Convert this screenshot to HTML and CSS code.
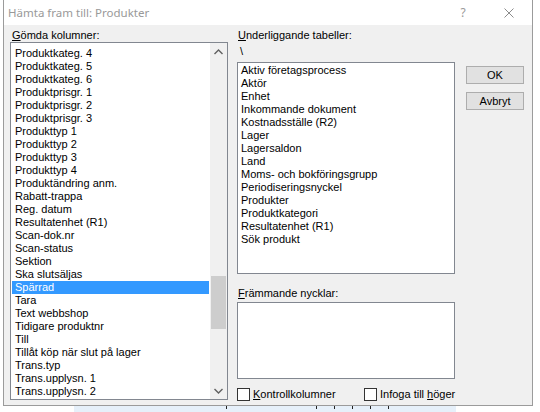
FILE: index.html
```html
<!DOCTYPE html>
<html lang="sv">
<head>
  <meta charset="UTF-8">
  <title>Hämta fram till: Produkter</title>
  <link rel="stylesheet" href="styles.css">
</head>
<body>

  <div class="window">
    <div class="titlebar">
      <span class="title">Hämta fram till: Produkter</span>
      <span class="caption-btn help">?</span>
      <span class="caption-btn close">
        <svg width="10" height="10" viewBox="0 0 10 10">
          <path d="M0.5 0.5 L9.5 9.5 M9.5 0.5 L0.5 9.5" stroke="#8c8c8c" stroke-width="1" fill="none"/>
        </svg>
      </span>
    </div>

    <div class="dialog">
      <!-- dolda kolumner -->
      <div class="col col-left">
        <div class="label"><u>G</u>ömda kolumner:</div>
        <div class="listbox listbox-hidden">
          <ul class="items">
            <li>Produktkateg. 4</li>
            <li>Produktkateg. 5</li>
            <li>Produktkateg. 6</li>
            <li>Produktprisgr. 1</li>
            <li>Produktprisgr. 2</li>
            <li>Produktprisgr. 3</li>
            <li>Produkttyp 1</li>
            <li>Produkttyp 2</li>
            <li>Produkttyp 3</li>
            <li>Produkttyp 4</li>
            <li>Produktändring anm.</li>
            <li>Rabatt-trappa</li>
            <li>Reg. datum</li>
            <li>Resultatenhet (R1)</li>
            <li>Scan-dok.nr</li>
            <li>Scan-status</li>
            <li>Sektion</li>
            <li>Ska slutsäljas</li>
            <li class="selected">Spärrad</li>
            <li>Tara</li>
            <li>Text webbshop</li>
            <li>Tidigare produktnr</li>
            <li>Till</li>
            <li>Tillåt köp när slut på lager</li>
            <li>Trans.typ</li>
            <li>Trans.upplysn. 1</li>
            <li>Trans.upplysn. 2</li>
          </ul>
          <div class="scrollbar">
            <div class="arrow">
              <svg width="9" height="6" viewBox="0 0 9 6">
                <path d="M0.5 5 L4.5 1 L8.5 5" stroke="#606060" stroke-width="1.4" fill="none"/>
              </svg>
            </div>
            <div class="track"><div class="thumb"></div></div>
            <div class="arrow">
              <svg width="9" height="6" viewBox="0 0 9 6">
                <path d="M0.5 1 L4.5 5 L8.5 1" stroke="#606060" stroke-width="1.4" fill="none"/>
              </svg>
            </div>
          </div>
        </div>
      </div>

      <!-- tabeller och nycklar -->
      <div class="col col-mid">
        <div class="label"><u>U</u>nderliggande tabeller:</div>
        <div class="path">\</div>
        <ul class="listbox listbox-tables">
          <li>Aktiv företagsprocess</li>
          <li>Aktör</li>
          <li>Enhet</li>
          <li>Inkommande dokument</li>
          <li>Kostnadsställe (R2)</li>
          <li>Lager</li>
          <li>Lagersaldon</li>
          <li>Land</li>
          <li>Moms- och bokföringsgrupp</li>
          <li>Periodiseringsnyckel</li>
          <li>Produkter</li>
          <li>Produktkategori</li>
          <li>Resultatenhet (R1)</li>
          <li>Sök produkt</li>
        </ul>
        <div class="label label-keys"><u>F</u>rämmande nycklar:</div>
        <div class="listbox listbox-keys"></div>
        <div class="checks">
          <label class="check check-first"><span class="box"></span><span><u>K</u>ontrollkolumner</span></label>
          <label class="check"><span class="box"></span><span>Infoga till <u>h</u>öger</span></label>
        </div>
      </div>

      <div class="col col-buttons">
        <button class="btn">OK</button>
        <button class="btn">Avbryt</button>
      </div>
    </div>
  </div>

  <!-- överkanten av fönstret bakom dialogen -->
  <div class="behind">
    <div class="behind-strip">
      <span class="tick"></span>
      <span class="tick"></span>
      <span class="tick"></span>
      <span class="tick"></span>
      <span class="tick"></span>
      <span class="tick"></span>
    </div>
  </div>

</body>
</html>
```

FILE: styles.css
```css
* {
  box-sizing: border-box;
}

html, body {
  margin: 0;
}

body {
  width: 540px;
  height: 412px;
  overflow: hidden;
  background: #fff;
  font-family: "Liberation Sans", Arial, sans-serif;
  font-size: 11px;
  color: #000;
}

ul {
  list-style: none;
  margin: 0;
  padding: 0;
}

u {
  text-decoration: underline;
  text-underline-offset: 1px;
}

/* fönsterram */
.window {
  margin-left: 3px;
  width: 530px;
  height: 406px;
  border: 1px solid #9b9b9b;
  border-top: 0;
  background: #f0f0f0;
}

.titlebar {
  height: 25px;
  background: #fff;
  display: flex;
  align-items: center;
  padding-left: 4px;
  color: #999;
}

.title {
  flex: 1;
  font-family: "Noto Sans", "Liberation Sans", sans-serif;
  font-size: 11.5px;
}

.caption-btn {
  width: 46px;
  height: 25px;
  display: flex;
  align-items: center;
  justify-content: center;
}

.help {
  font-family: "Noto Sans", sans-serif;
  font-size: 12px;
  color: #9a9a9a;
}

/* dialoginnehåll */
.dialog {
  height: 380px;
  display: flex;
  padding: 4px 0 0 6px;
}

.col {
  display: flex;
  flex-direction: column;
}

.col-left {
  width: 218px;
}

.col-mid {
  width: 218px;
  margin-left: 9px;
}

.col-buttons {
  width: 58px;
  margin-left: 11px;
  padding-top: 37px;
  gap: 8px;
}

.label {
  height: 13px;
  line-height: 13px;
  margin-left: 2px;
  white-space: nowrap;
}

.col-mid .label {
  margin-left: 1px;
}

.path {
  height: 13px;
  line-height: 13px;
  margin: 3px 0 4px 3px;
}

.listbox {
  background: #fff;
  border: 1px solid #828790;
}

.listbox li {
  height: 13px;
  line-height: 13px;
  white-space: nowrap;
}

/* vänster lista med rullningslist */
.listbox-hidden {
  height: 358px;
  display: flex;
}

.items {
  flex: 1;
  padding: 4px 1px 0 1px;
  overflow: hidden;
}

.items li {
  padding-left: 3px;
}

.items li.selected {
  background: #3399ff;
  color: #fff;
}

.scrollbar {
  width: 17px;
  background: #f0f0f0;
  display: flex;
  flex-direction: column;
}

.arrow {
  height: 17px;
  display: flex;
  align-items: center;
  justify-content: center;
}

.track {
  flex: 1;
}

.thumb {
  margin: 216px 1px 0 1px;
  height: 53px;
  background: #cdcdcd;
}

/* högra listor */
.listbox-tables {
  height: 212px;
  padding: 1px 0 0 3px;
}

.label-keys {
  margin-top: 13px;
}

.listbox-keys {
  height: 77px;
  margin-top: 2px;
}

.checks {
  display: flex;
  margin-top: 9px;
}

.check {
  display: flex;
  align-items: center;
  gap: 3px;
  height: 13px;
  line-height: 13px;
  white-space: nowrap;
  flex-shrink: 0;
}

.check-first {
  width: 127px;
}

.box {
  width: 13px;
  height: 13px;
  flex-shrink: 0;
  background: #fff;
  border: 1px solid #333;
}

.btn {
  width: 58px;
  height: 18px;
  padding: 0;
  background: #e1e1e1;
  border: 1px solid #adadad;
  font-family: "Liberation Sans", Arial, sans-serif;
  font-size: 11px;
  color: #000;
}

/* bakomliggande fönster */
.behind {
  height: 6px;
  display: flex;
}

.behind-strip {
  margin-left: 74px;
  width: 382px;
  background: #e6f0fa;
  display: flex;
  align-items: flex-start;
  padding-left: 152px;
  gap: 17px;
}

.tick {
  width: 1px;
  height: 3px;
  background: #222;
}

.tick:nth-child(2) {
  margin-left: 72px;
}
```
